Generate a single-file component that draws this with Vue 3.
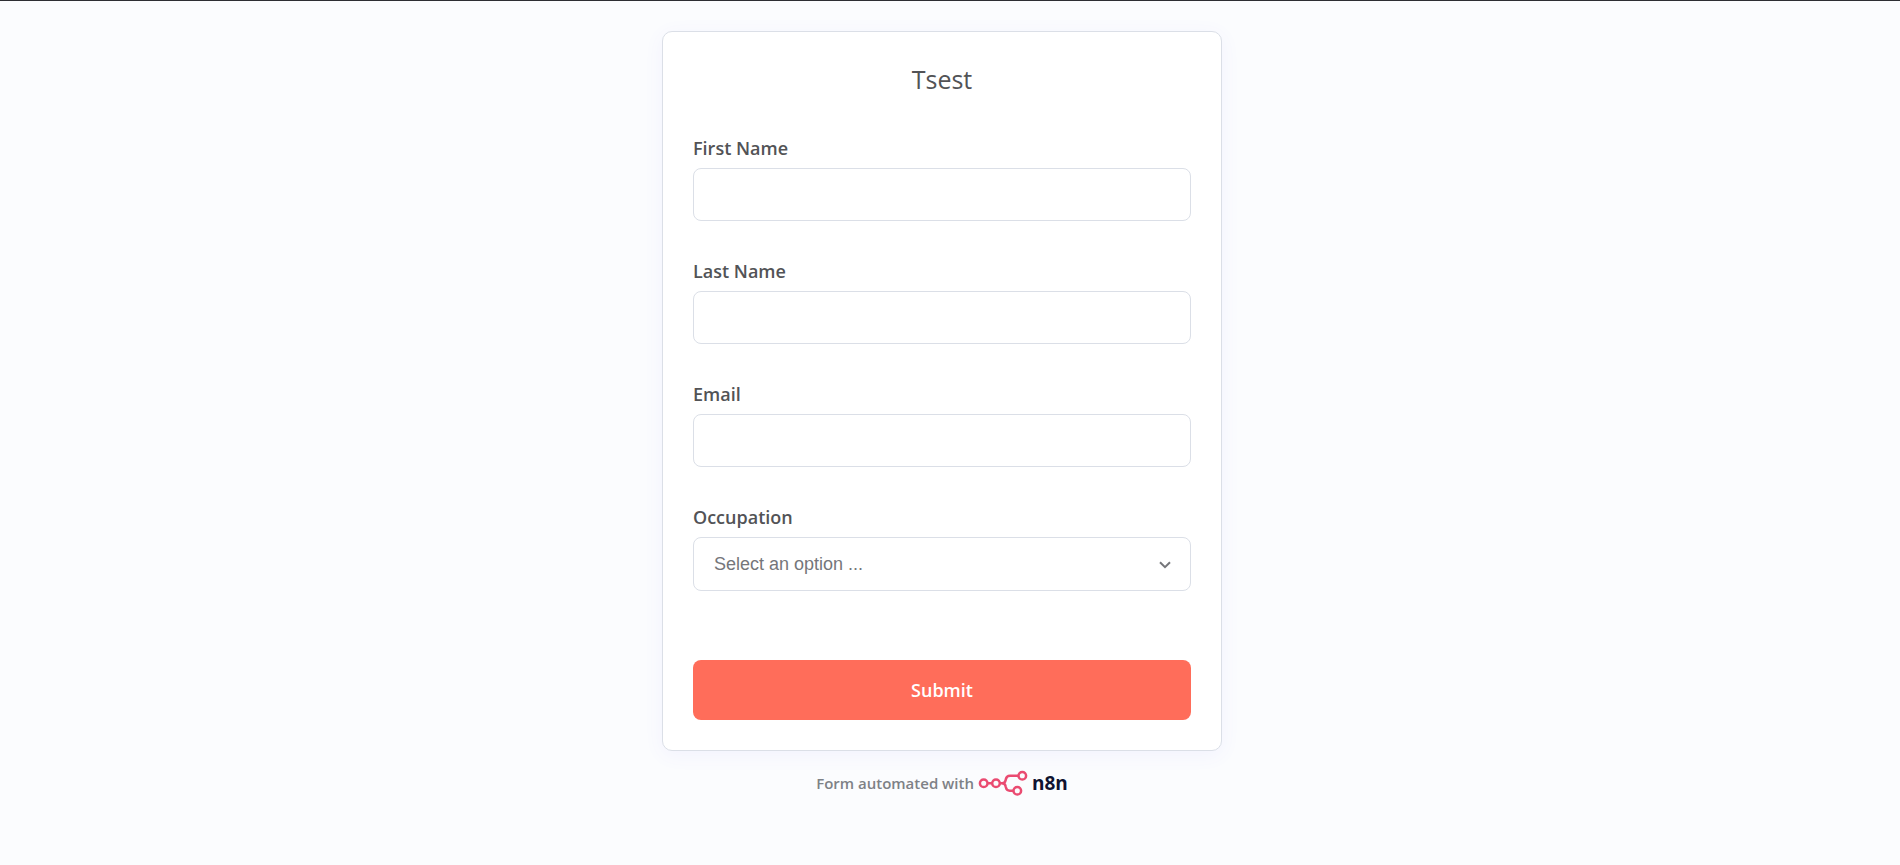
<script setup>
import { reactive } from 'vue'

const fields = [
  { id: 'first-name', label: 'First Name', type: 'text' },
  { id: 'last-name', label: 'Last Name', type: 'text' },
  { id: 'email', label: 'Email', type: 'email' },
]
const values = reactive({ 'first-name': '', 'last-name': '', email: '', occupation: '' })
</script>

<template>
  <main class="page">
    <form class="card" @submit.prevent>
      <h1 class="title">Tsest</h1>
      <div v-for="field in fields" :key="field.id" class="field">
        <label :for="field.id">{{ field.label }}</label>
        <input :id="field.id" v-model="values[field.id]" class="control" :type="field.type" />
      </div>
      <div class="field">
        <label for="occupation">Occupation</label>
        <div class="select-wrap">
          <select id="occupation" v-model="values.occupation" class="control">
            <option value="" disabled>Select an option ...</option>
          </select>
          <svg class="chevron" viewBox="0 0 12 8" aria-hidden="true">
            <path d="M1 1.2 L6 6.2 L11 1.2" fill="none" stroke="#75767a" stroke-width="2" />
          </svg>
        </div>
      </div>
      <button class="submit" type="submit">Submit</button>
    </form>
    <a class="credit" href="#">
      <span>Form automated with</span>
      <svg class="mark" viewBox="0 0 50 26" aria-hidden="true">
        <g fill="none" stroke="#ea4b71" stroke-width="2.5">
          <circle cx="5.7" cy="13.3" r="3.8" />
          <circle cx="18" cy="13.3" r="3.8" />
          <circle cx="44.3" cy="5.7" r="3.8" />
          <circle cx="39.3" cy="20.7" r="3.8" />
          <path d="M9.5 13.3 H14.2 M21.8 13.3 H24.2 C26.2 13.3 27.2 12.3 27.6 10.3 L27.9 9.2 C28.3 6.8 29.8 5.7 32 5.7 H40.5" />
          <path d="M24.2 13.3 C26.2 13.3 27.2 14.3 27.6 16.3 L27.9 17.4 C28.3 19.6 29.6 20.7 31.8 20.7 H35.5" />
        </g>
      </svg>
      <span class="brand">n8n</span>
    </a>
  </main>
</template>

<style>
html {
  background: #fbfcfe;
}
</style>

<style scoped>
.page {
  display: flex;
  flex-direction: column;
  align-items: center;
  box-sizing: border-box;
  min-height: 100vh;
  padding: 30px 16px 30px 0;
  border-top: 1px solid #2d2e33;
  background: #fbfcfe;
  font-family: "Open Sans", sans-serif;
}
.card {
  display: flex;
  flex-direction: column;
  box-sizing: border-box;
  width: 100%;
  max-width: 560px;
  padding: 30px;
  border: 1px solid #dbdfe7;
  border-radius: 10px;
  background: #fff;
  box-shadow: 0 4px 20px 0 rgba(99, 77, 255, 0.06);
}
.title {
  margin: 0 0 40px;
  color: #525356;
  font-size: 25px;
  font-weight: 400;
  line-height: 34px;
  text-align: center;
}
.field {
  display: flex;
  flex-direction: column;
  gap: 8px;
  margin-bottom: 38px;
}
label {
  color: #525356;
  font-size: 18px;
  font-weight: 600;
  line-height: 24px;
}
.control {
  box-sizing: border-box;
  width: 100%;
  height: 53px;
  margin: 0;
  padding: 0 20px;
  border: 1px solid #dbdfe7;
  border-radius: 8px;
  background: #fff;
  color: #75767a;
  font-family: "Liberation Sans", Arial, sans-serif;
  font-size: 18px;
}
.select-wrap {
  position: relative;
}
select.control {
  display: block;
  height: 54px;
  appearance: none;
}
.chevron {
  position: absolute;
  top: 24px;
  right: 20px;
  width: 12px;
  height: 8px;
  pointer-events: none;
}
.submit {
  height: 60px;
  margin-top: 31px;
  border: 0;
  border-radius: 8px;
  background: #ff6d5a;
  color: #fff;
  font-family: inherit;
  font-size: 18px;
  font-weight: 600;
}
.credit {
  display: flex;
  align-items: center;
  margin-top: 19px;
  color: #7e8186;
  font-size: 15px;
  font-weight: 600;
  line-height: 26px;
  text-decoration: none;
}
.mark {
  width: 50px;
  height: 26px;
  margin-left: 4px;
}
.brand {
  margin-left: 4px;
  color: #101330;
  font-size: 19px;
  font-weight: 700;
}
</style>
